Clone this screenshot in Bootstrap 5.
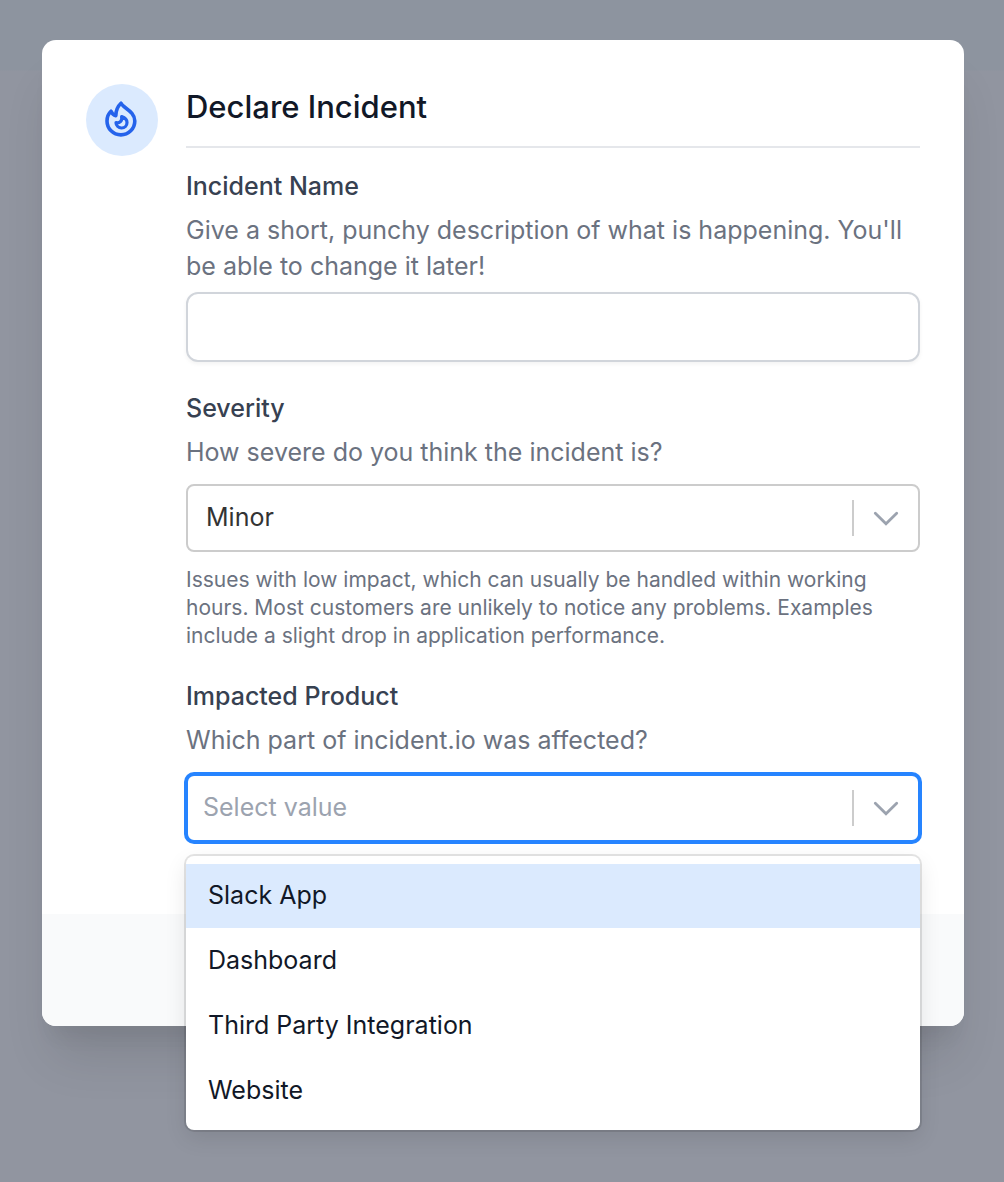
<!DOCTYPE html>
<html lang="en">
<head>
<meta charset="utf-8">
<meta name="viewport" content="width=device-width, initial-scale=1">
<title>Declare Incident</title>
<link href="https://cdn.jsdelivr.net/npm/bootstrap@5.3.0/dist/css/bootstrap.min.css" rel="stylesheet">
<style>
  body { font-family: Inter, "Liberation Sans", sans-serif; font-size: 25px; line-height: 36px; color: #111827; min-height: 100vh;
    background: linear-gradient(#8d949f 70px, #9195a0 71px); }
  .page { padding: 40px 40px 156px 42px; }
  .dialog-card { border: 0; border-radius: 14px; box-shadow: 0 40px 50px -10px rgba(0,0,0,.11), 0 20px 20px -10px rgba(0,0,0,.06); }
  .dialog-card .card-body { padding: 44px 44px 72px; gap: 28px; }
  .dialog-card .card-footer { height: 112px; border: 0; background: #f9fafb; border-radius: 0 0 14px 14px; }
  .flame { width: 72px; height: 72px; background: #dbeafe; color: #2563eb; }
  .dialog-title { font-size: 31px; line-height: 46px; font-weight: 500; padding-bottom: 16px; margin: 0 0 20px; border-bottom: 2px solid #e5e7eb; }
  .field + .field { margin-top: 28px; }
  .field label { display: block; font-weight: 500; color: #374151; margin-bottom: 8px; }
  .hint { color: #6b7280; margin-bottom: 14px; }
  .note { color: #6b7280; font-size: 21px; line-height: 28px; margin: 14px 0 0; }
  .field .form-control { height: 70px; border: 2px solid #d1d5db; border-radius: 12px; box-shadow: 0 2px 4px rgba(0,0,0,.05); }
  .field .form-select { height: 68px; font-size: 25px; line-height: 36px; padding: 0 80px 2px 18px; border: 2px solid #ccc; border-radius: 8px; color: #333; background-image: none; }
  .field .form-select.is-open { padding-left: 15px; border-color: #2684ff; box-shadow: 0 0 0 2px #2684ff; color: #9ca3af; }
  .select-end { top: 0; bottom: 0; right: 20px; gap: 18px; pointer-events: none; color: #9ca3af; }
  .select-end .bar { width: 2px; height: 36px; background: #ccc; }
  .options { top: 82px; left: 0; right: 0; z-index: 5; gap: 1px; padding: 8px 0 7px; background: #fff; border-radius: 8px;
    box-shadow: 0 0 0 2px rgba(0,0,0,.1), 0 8px 22px rgba(0,0,0,.1); }
  .options .list-group-item { height: 64px; border: 0; border-radius: 0; padding: 0 22px 2px; color: #111827; background: transparent; }
  .options .list-group-item.chosen { background: #dbeafe; }
</style>
<script src="https://cdn.jsdelivr.net/npm/bootstrap@5.3.0/dist/js/bootstrap.bundle.min.js"></script>
</head>
<body>
<main class="page">
  <form class="card dialog-card">
    <div class="card-body d-flex align-items-start">
      <div class="flame rounded-circle flex-shrink-0 d-flex">
        <svg width="72" height="72" viewBox="6 6 72 72" fill="none" stroke="currentColor" stroke-linejoin="round" stroke-linecap="round" aria-hidden="true">
          <path stroke-width="3.6" d="M35.8 37.7C35.8 31.7 38 28 41 25.2C42.8 30 54.8 33 54.8 43A13.9 13.9 0 0 1 27 43C27 38.8 28.2 35.8 31 33.2C32 35.7 33.5 37.2 35.8 37.7Z"/>
          <path stroke-width="3.2" d="M41.6 38.6C44.8 39.8 47 41.6 47 44.4A5.5 5.5 0 0 1 36 44.6C39.4 45.6 42.6 43 41.6 38.6Z"/>
        </svg>
      </div>
      <div class="flex-grow-1">
        <h1 class="dialog-title">Declare Incident</h1>
        <div class="field">
          <label for="name">Incident Name</label>
          <p class="hint mb-2" id="name-hint">Give a short, punchy description of what is happening. You'll be able to change it later!</p>
          <input class="form-control" type="text" id="name" aria-describedby="name-hint">
        </div>
        <div class="field">
          <label for="severity">Severity</label>
          <p class="hint">How severe do you think the incident is?</p>
          <div class="position-relative">
            <select class="form-select" id="severity"><option>Minor</option><option>Major</option><option>Critical</option></select>
            <div class="select-end position-absolute d-flex align-items-center">
              <span class="bar"></span>
              <svg width="28" height="16" viewBox="0 0 28 16" fill="none" stroke="currentColor" stroke-width="2.8" stroke-linecap="round" aria-hidden="true"><path d="M3.3 3.3L14 13.8L24.7 3.3"/></svg>
            </div>
          </div>
          <p class="note">Issues with low impact, which can usually be handled within working hours. Most customers are unlikely to notice any problems. Examples include a slight drop in application performance.</p>
        </div>
        <div class="field">
          <label for="product">Impacted Product</label>
          <p class="hint mb-3">Which part of incident.io was affected?</p>
          <div class="position-relative">
            <select class="form-select is-open" id="product"><option>Select value</option></select>
            <div class="select-end position-absolute d-flex align-items-center">
              <span class="bar"></span>
              <svg width="28" height="16" viewBox="0 0 28 16" fill="none" stroke="currentColor" stroke-width="2.8" stroke-linecap="round" aria-hidden="true"><path d="M3.3 3.3L14 13.8L24.7 3.3"/></svg>
            </div>
            <div class="options list-group position-absolute">
              <button type="button" class="list-group-item list-group-item-action chosen">Slack App</button>
              <button type="button" class="list-group-item list-group-item-action">Dashboard</button>
              <button type="button" class="list-group-item list-group-item-action">Third Party Integration</button>
              <button type="button" class="list-group-item list-group-item-action">Website</button>
            </div>
          </div>
        </div>
      </div>
    </div>
    <div class="card-footer"></div>
  </form>
</main>
</body>
</html>
